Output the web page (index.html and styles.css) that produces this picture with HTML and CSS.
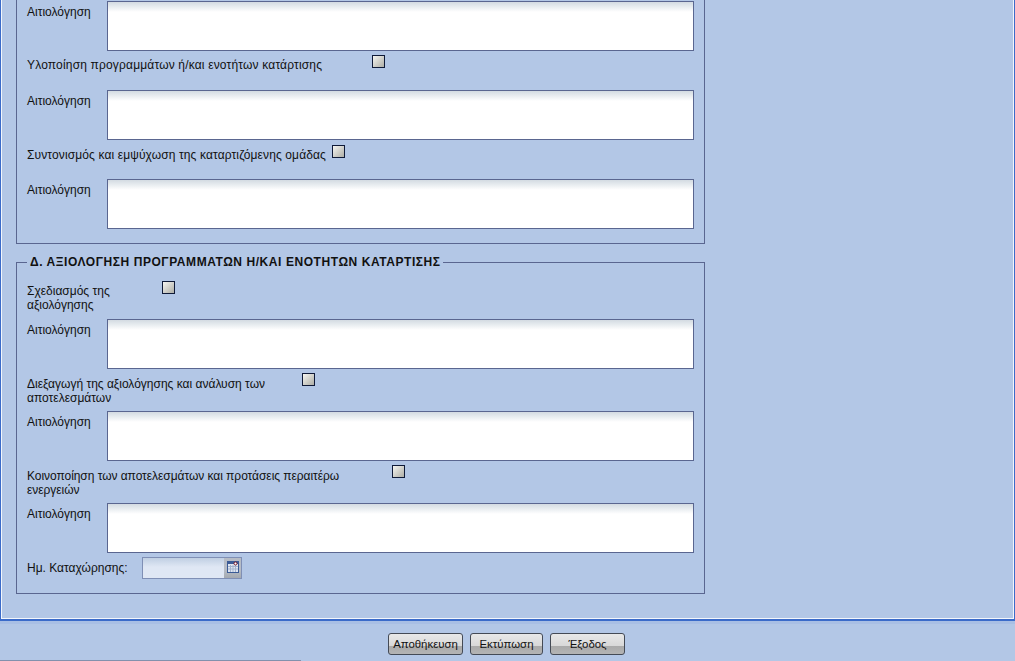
FILE: index.html
```html
<!DOCTYPE html>
<html lang="el">
<head>
<meta charset="utf-8">
<title>Αξιολόγηση</title>
<link rel="stylesheet" href="styles.css">
</head>
<body>
<div class="page">
  <main class="panel">
    <fieldset class="group group-open">
      <div class="reason first"><label class="reason-label">Αιτιολόγηση</label><textarea class="box"></textarea></div>
      <div class="check w345 single-a"><span class="check-label">Υλοποίηση προγραμμάτων ή/και ενοτήτων κατάρτισης</span><input class="tick" type="checkbox"></div>
      <div class="reason"><label class="reason-label">Αιτιολόγηση</label><textarea class="box"></textarea></div>
      <div class="check w305 single-b"><span class="check-label">Συντονισμός και εμψύχωση της καταρτιζόμενης ομάδας</span><input class="tick" type="checkbox"></div>
      <div class="reason"><label class="reason-label">Αιτιολόγηση</label><textarea class="box"></textarea></div>
    </fieldset>
    <fieldset class="group group-d">
      <legend class="group-title">Δ. ΑΞΙΟΛΟΓΗΣΗ ΠΡΟΓΡΑΜΜΑΤΩΝ Η/ΚΑΙ ΕΝΟΤΗΤΩΝ ΚΑΤΑΡΤΙΣΗΣ</legend>
      <div class="check w135 double first-check"><span class="check-label">Σχεδιασμός της αξιολόγησης</span><input class="tick" type="checkbox"></div>
      <div class="reason"><label class="reason-label">Αιτιολόγηση</label><textarea class="box"></textarea></div>
      <div class="check w275 double"><span class="check-label">Διεξαγωγή της αξιολόγησης και ανάλυση των αποτελεσμάτων</span><input class="tick" type="checkbox"></div>
      <div class="reason"><label class="reason-label">Αιτιολόγηση</label><textarea class="box"></textarea></div>
      <div class="check w365 double"><span class="check-label">Κοινοποίηση των αποτελεσμάτων και προτάσεις περαιτέρω ενεργειών</span><input class="tick" type="checkbox"></div>
      <div class="reason"><label class="reason-label">Αιτιολόγηση</label><textarea class="box"></textarea></div>
      <div class="date-row">
        <span class="date-label">Ημ. Καταχώρησης:</span>
        <div class="date-field">
          <div class="date-input"></div>
          <div class="date-btn">
            <svg width="12" height="12" viewBox="0 0 12 12"><rect x="0.5" y="0.5" width="11" height="11" fill="#dfe6f2" stroke="#3a5a96"/><rect x="1" y="1" width="10" height="2" fill="#3a5a96"/><path d="M1 5.5h10M1 8h10M3.5 4v7M6 4v7M8.5 4v7" stroke="#a3b3cd" stroke-width="1"/><circle cx="8.5" cy="2.5" r="1.5" fill="#fff" stroke="#7a1a2a"/></svg>
          </div>
        </div>
      </div>
    </fieldset>
  </main>
  <footer class="actions">
    <button class="btn btn-save" type="button">Αποθήκευση</button>
    <button class="btn btn-print" type="button">Εκτύπωση</button>
    <button class="btn btn-exit" type="button">Έξοδος</button>
  </footer>
  <div class="scroll-edge"></div>
</div>
</body>
</html>
```

FILE: styles.css
```css
* { box-sizing: border-box; }
html, body { margin: 0; height: 100%; overflow: hidden; }
body { background: #b3c7e6; font-family: "Liberation Sans", Arial, sans-serif; font-size: 12px; color: #111; }
.page { width: 1015px; height: 661px; display: flex; flex-direction: column; position: relative; }
.panel {
  height: 621px; flex: none;
  padding: 0 9px 0 13px;
  border-left: 1px solid #3b6bc9; border-right: 1px solid #3b6bc9; border-bottom: 2px solid #3b6bc9;
  box-shadow: inset 1px 0 0 #f2f6fc, inset -1px 0 0 #f2f6fc, inset 0 -1px 0 #f2f6fc;
  background: #b3c7e6;
}
.group { margin: 0; width: 689px; min-width: 0; border: 1px solid #5a6690; padding: 0 10px; }
.group-open { border-top: none; height: 244px; margin-left: 2px; padding-top: 1px; }
.group-d { height: 339px; margin-top: 11px; margin-left: 2px; padding-top: 0; }
.group-title { font-weight: bold; font-size: 12px; padding: 0 2px 0 3px; margin-left: 0; color: #111; line-height: 14px; letter-spacing: 0.57px; }
.reason { display: flex; height: 50px; }
.reason-label { width: 80px; flex: none; padding-top: 4px; line-height: 14px; }
.box {
  width: 587px; height: 50px; margin: 0; padding: 0; resize: none; display: block;
  border: 1px solid #5a6690;
  background: linear-gradient(#d3dbe2 0, #ffffff 10px);
}
.check { display: flex; align-items: flex-start; }
.check-label { line-height: 14px; flex: none; }
.single-a { height: 39px; padding-top: 4px; }
.single-a .check-label { padding-top: 3px; width: 345px; letter-spacing: 0.17px; }
.single-b { height: 39px; padding-top: 5px; }
.single-b .check-label { padding-top: 3px; width: 305px; letter-spacing: 0.12px; }
.double { height: 42px; padding-top: 4px; }
.first-check { height: 50px; padding-top: 12px; }
.w135 .check-label { width: 135px; padding-top: 3px; }
.w275 .check-label { width: 275px; padding-top: 4px; }
.w365 .check-label { width: 365px; padding-top: 4px; letter-spacing: -0.05px; }
.tick {
  appearance: none; -webkit-appearance: none; margin: 0; width: 13px; height: 13px; flex: none;
  border: 1px solid #0f1a38; background: linear-gradient(135deg, #f6f6f2, #aeaea6);
}
.date-row { display: flex; align-items: center; height: 20px; margin-top: 5px; }
.date-label { width: 115px; flex: none; }
.date-field { display: flex; width: 100px; height: 22px; border: 1px solid #7f8fb5; }
.date-input { flex: 1; background: linear-gradient(#c0cfe3 0, #dfe7f4 9px); }
.date-btn { width: 17px; flex: none; background: linear-gradient(#b6bcc6 60%, #a4a9b0); display: flex; align-items: flex-start; justify-content: center; padding-top: 3px; }
.actions { flex: 1; display: flex; justify-content: center; gap: 7px; padding: 9px 2px 0 0; border-top: 3px solid #a9bfe4; }
.btn {
  height: 22px; padding: 0; font: 11.4px "Liberation Sans", Arial, sans-serif; color: #111;
  border: 1px solid #444a55; border-radius: 3px;
  background: linear-gradient(#e8e8e8 0, #d8d8d8 60%, #aaaaaa 62%, #b4b4b4 100%);
}
.btn-save { width: 75px; }
.btn-print { width: 73px; }
.btn-exit { width: 75px; }
.scroll-edge { position: absolute; left: 0; bottom: 0; width: 301px; height: 1px; background: #8291ad; }
```
